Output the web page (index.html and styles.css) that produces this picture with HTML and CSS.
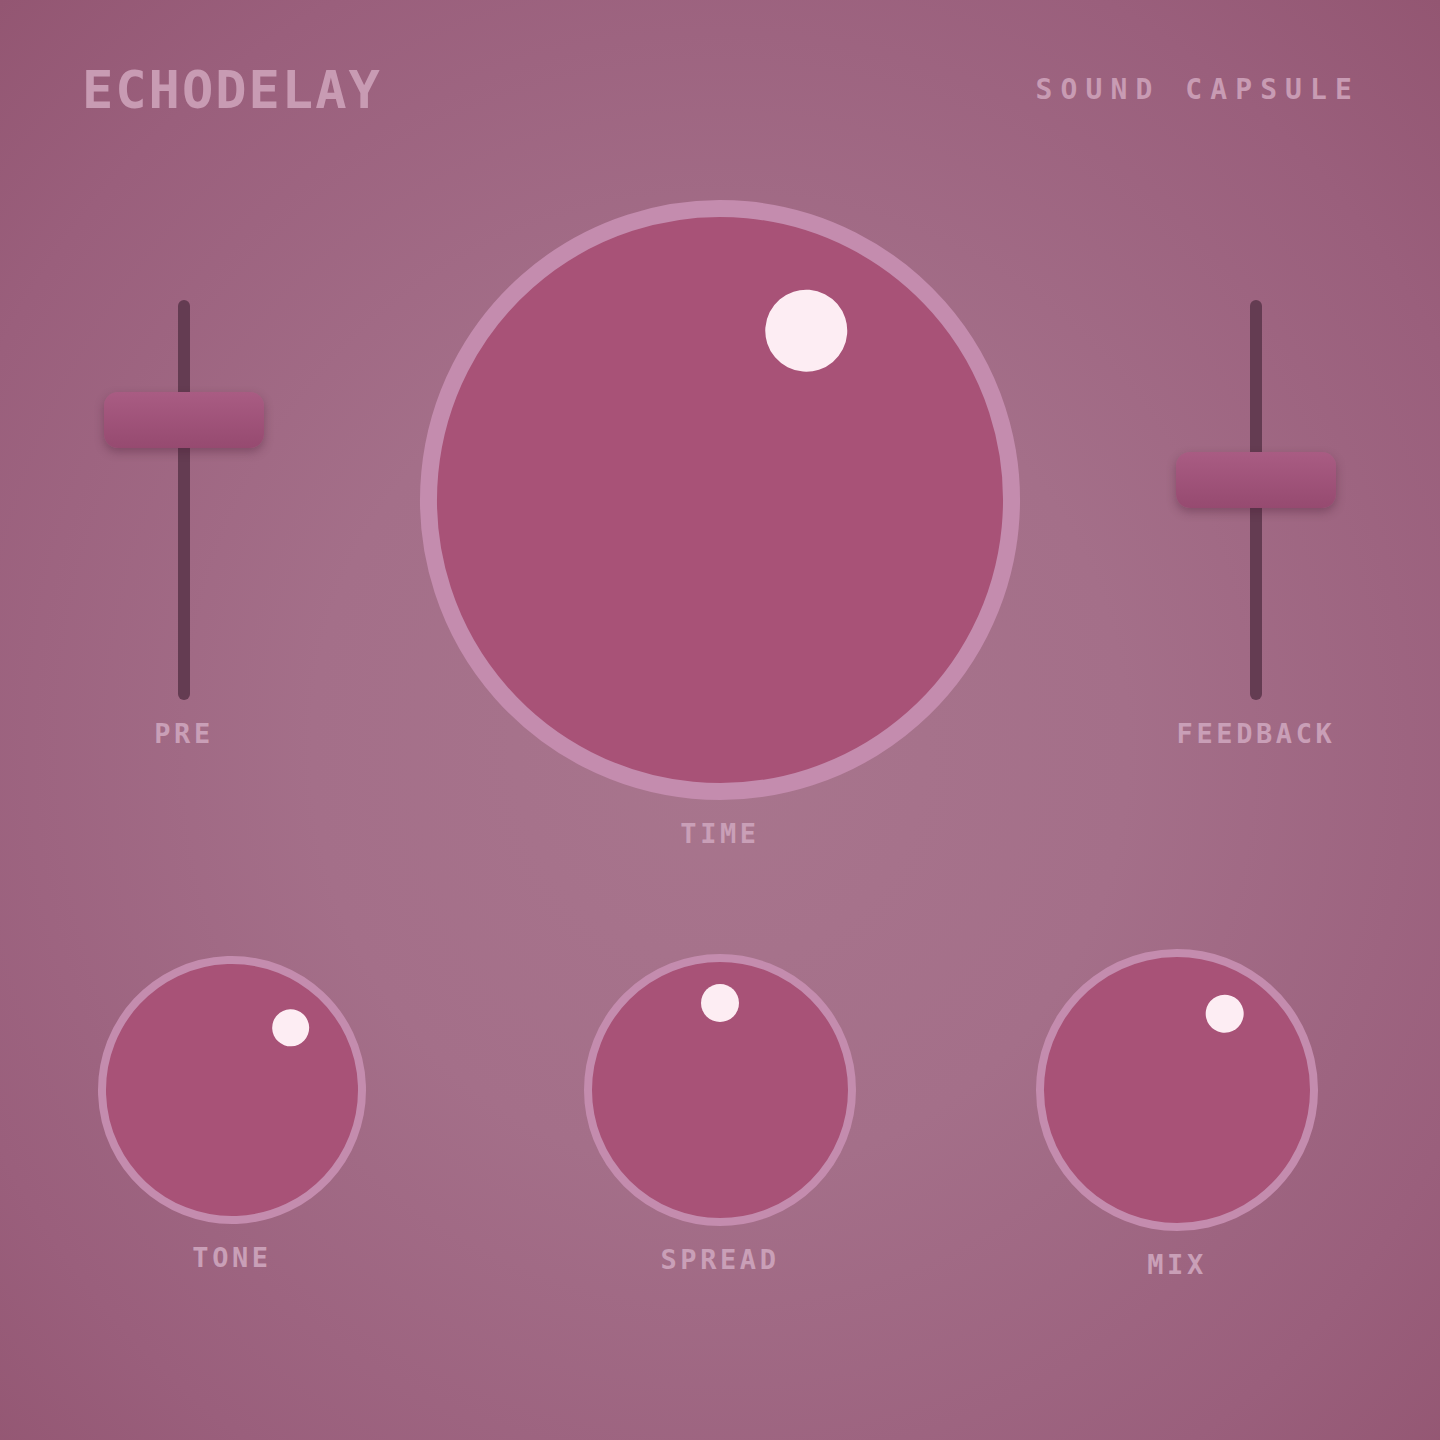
FILE: index.html
```
<!DOCTYPE html>
<html lang="en">

<head>
    <meta charset="UTF-8">
    <meta name="viewport" content="width=device-width, initial-scale=1.0">
    <title>EchoDelay</title>
    <link rel="stylesheet" href="styles.css">
</head>

<body>
    <div class="panel">
        <header class="panel-header">
            <h1 class="brand">ECHODELAY</h1>
            <span class="maker">SOUND CAPSULE</span>
        </header>

        <section class="deck deck-top">
            <div class="control slider">
                <div class="track">
                    <div class="handle" style="top: 92px"></div>
                </div>
                <span class="label">PRE</span>
            </div>

            <div class="control">
                <div class="knob knob-time" style="transform: rotate(27deg)">
                    <div class="dot"></div>
                </div>
                <span class="label">TIME</span>
            </div>

            <div class="control slider">
                <div class="track">
                    <div class="handle" style="top: 152px"></div>
                </div>
                <span class="label">FEEDBACK</span>
            </div>
        </section>

        <section class="deck deck-bottom">
            <div class="control">
                <div class="knob knob-tone" style="transform: rotate(43deg)">
                    <div class="dot"></div>
                </div>
                <span class="label">TONE</span>
            </div>

            <div class="control">
                <div class="knob knob-spread" style="transform: rotate(0deg)">
                    <div class="dot"></div>
                </div>
                <span class="label">SPREAD</span>
            </div>

            <div class="control">
                <div class="knob knob-mix" style="transform: rotate(32deg)">
                    <div class="dot"></div>
                </div>
                <span class="label">MIX</span>
            </div>
        </section>
    </div>
</body>

</html>
```

FILE: styles.css
```
*,
::before,
::after {
    margin: 0;
    padding: 0;
    box-sizing: border-box;
}

html,
body {
    width: 100%;
    height: 100%;
    font-family: 'DejaVu Sans Mono', 'Liberation Mono', monospace;
    color: #c99db5;
    background-color: #9c6380;
}

body {
    background: radial-gradient(ellipse farthest-corner at 50% 52%, #a8758d 0%, #a46f89 40%, #9a5f7c 80%, #935672 100%);
}

.panel {
    width: 1440px;
    height: 1440px;
}

.panel-header {
    display: flex;
    justify-content: space-between;
    align-items: center;
    padding: 60px 77px 0 82px;
    height: 120px;
}

.brand {
    font-size: 52px;
    font-weight: bold;
    line-height: 1;
    letter-spacing: 2px;
    color: #c89bb3;
}

.maker {
    margin-right: 3px;
    font-size: 28px;
    font-weight: bold;
    line-height: 1;
    letter-spacing: 8.1px;
    color: #c89bb3;
}

.deck {
    display: grid;
    align-items: center;
}

.deck-top {
    margin-top: 80px;
    grid-template-columns: 160px 1fr 160px;
    padding: 0 104px;
}

.deck-bottom {
    margin-top: 102px;
    grid-template-columns: 464px 512px 402px;
}

.control {
    display: flex;
    flex-direction: column;
    align-items: center;
}

.label {
    margin-top: 20px;
    font-size: 27px;
    font-weight: bold;
    line-height: 1;
    letter-spacing: 3.6px;
    color: #c99fb7;
}

/* sliders */
.track {
    position: relative;
    width: 12px;
    height: 400px;
    border-radius: 6px;
    background-color: #643c52;
}

.handle {
    position: absolute;
    left: -74px;
    width: 160px;
    height: 56px;
    border-radius: 14px;
    background: linear-gradient(to bottom, #a95c83, #964a70);
    box-shadow: 0 4px 10px rgba(70, 25, 50, .35);
}

/* knobs */
.knob {
    position: relative;
    border-radius: 50%;
    border: 8px solid #c48cae;
    background-color: #a85277;
}

.knob-time {
    width: 600px;
    height: 600px;
    border-width: 17px;
}

.knob-tone {
    width: 268px;
    height: 268px;
}

.knob-spread {
    width: 272px;
    height: 272px;
}

.knob-mix {
    width: 282px;
    height: 282px;
}

.dot {
    position: absolute;
    left: 50%;
    border-radius: 50%;
    background-color: #fdedf3;
}

.knob-time .dot {
    top: 52px;
    width: 82px;
    height: 82px;
    margin-left: -41px;
}

.knob-tone .dot {
    top: 22px;
    width: 37px;
    height: 37px;
    margin-left: -18.5px;
}

.knob-spread .dot {
    top: 22px;
    width: 38px;
    height: 38px;
    margin-left: -19px;
}

.knob-mix .dot {
    top: 24px;
    width: 38px;
    height: 38px;
    margin-left: -19px;
}
```
